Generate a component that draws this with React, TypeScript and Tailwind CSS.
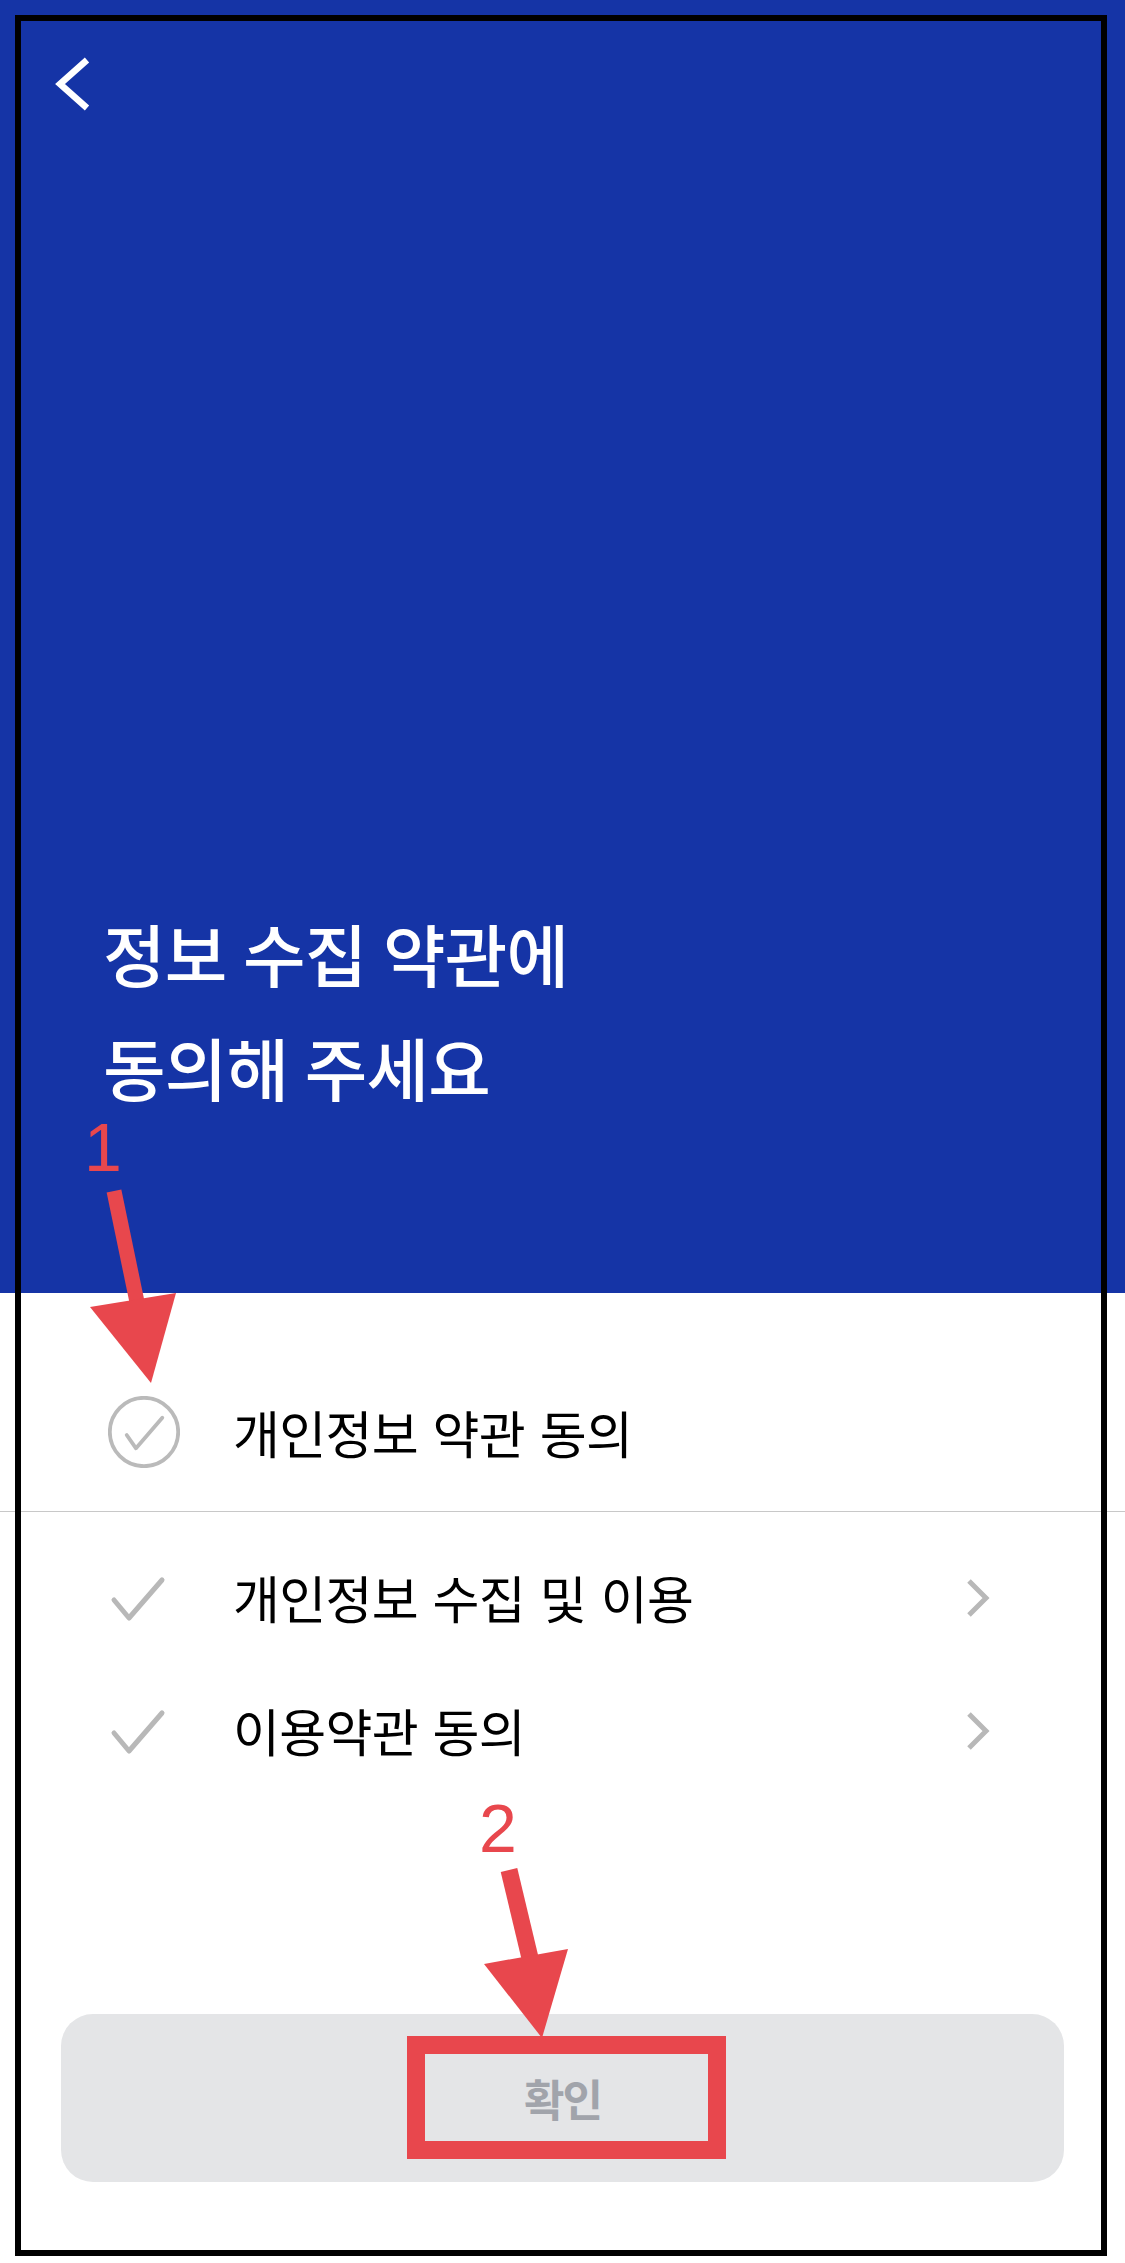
import React from "react";

const korean = '"Noto Sans CJK KR", "Noto Sans", sans-serif';

const items = [
  { label: "개인정보 수집 및 이용" },
  { label: "이용약관 동의" },
];

function CheckMark() {
  return (
    <svg width="72" height="72" viewBox="0 0 72 72" fill="none">
      <polyline
        points="6,38 21,56 54,18"
        stroke="#b8b8b8"
        strokeWidth="5"
        strokeLinecap="round"
        strokeLinejoin="round"
      />
    </svg>
  );
}

function Chevron() {
  return (
    <svg width="24" height="40" viewBox="0 0 24 40" fill="none">
      <polyline
        points="3,3 20,20 3,37"
        stroke="#b8b8b8"
        strokeWidth="5"
        strokeLinejoin="miter"
      />
    </svg>
  );
}

export default function App() {
  return (
    <div
      className="relative h-[2263px] w-[1125px] overflow-hidden bg-white"
      style={{ fontFamily: korean }}
    >
      {/* Header */}
      <div className="flex h-[1293px] flex-col justify-between bg-[#1534a6]">
        <div className="pl-[52px] pt-[54px]">
          <svg width="40" height="60" viewBox="0 0 40 60" fill="none">
            <polyline
              points="35,6 8,30 35,54"
              stroke="#ffffff"
              strokeWidth="6.5"
              strokeLinejoin="miter"
            />
          </svg>
        </div>
        <h1 className="pb-[169px] pl-[103px] text-[68px] font-medium leading-[114px] tracking-[-0.8px] text-white [word-spacing:2px]">
          정보 수집 약관에
          <br />
          동의해 주세요
        </h1>
      </div>

      {/* Agree all */}
      <div className="flex items-center gap-[53px] pb-[43px] pl-[108px] pt-[103px]">
        <svg width="72" height="72" viewBox="0 0 72 72" fill="none">
          <circle cx="36" cy="36" r="34.2" stroke="#bababa" strokeWidth="3.8" />
          <polyline
            points="18.7,39 28,52.3 54.3,21.7"
            stroke="#bababa"
            strokeWidth="3.8"
            strokeLinecap="round"
            strokeLinejoin="round"
          />
        </svg>
        <span className="text-[51px] leading-none tracking-[-0.7px] text-black [word-spacing:4px]">
          개인정보 약관 동의
        </span>
      </div>

      <div className="h-px bg-[#c8c8c8]" />

      {/* Items */}
      <div className="mt-[19px]">
        {items.map((item, i) => (
          <div key={i} className="flex h-[133px] items-center pl-[108px] pr-[135px]">
            <CheckMark />
            <span className="ml-[53px] flex-1 text-[51px] leading-none tracking-[-0.7px] text-black [word-spacing:4px]">
              {item.label}
            </span>
            <Chevron />
          </div>
        ))}
      </div>

      {/* Confirm */}
      <div className="mx-[61px] mt-[217px] flex h-[168px] items-center justify-center rounded-[32px] bg-[#e4e5e7]">
        <span className="text-[44px] font-bold leading-none tracking-[-2px] text-[#a1a4ab]">
          확인
        </span>
      </div>

      {/* Annotation frame */}
      <div className="pointer-events-none absolute left-[15px] top-[15px] h-[2241px] w-[1092px] border-[6px] border-black" />

      {/* Annotation arrows */}
      <svg
        className="pointer-events-none absolute left-0 top-0"
        width="1125"
        height="2263"
        viewBox="0 0 1125 2263"
      >
        <line x1="114" y1="1191" x2="137" y2="1302" stroke="#e8474d" strokeWidth="15" />
        <polygon points="90,1307 176,1293 151,1383" fill="#e8474d" />
        <line x1="509" y1="1870" x2="530" y2="1958" stroke="#e8474d" strokeWidth="17" />
        <polygon points="484,1964 568,1949 542,2038" fill="#e8474d" />
      </svg>
      <span
        className="pointer-events-none absolute left-[84px] top-[1113px] text-[68px] leading-none text-[#e8474d]"
        style={{ fontFamily: '"Liberation Sans", Arial, sans-serif' }}
      >
        1
      </span>
      <span
        className="pointer-events-none absolute left-[479px] top-[1794px] text-[68px] leading-none text-[#e8474d]"
        style={{ fontFamily: '"Liberation Sans", Arial, sans-serif' }}
      >
        2
      </span>
      <div className="pointer-events-none absolute left-[407px] top-[2036px] h-[123px] w-[319px] border-[18px] border-[#e8474d]" />
    </div>
  );
}
